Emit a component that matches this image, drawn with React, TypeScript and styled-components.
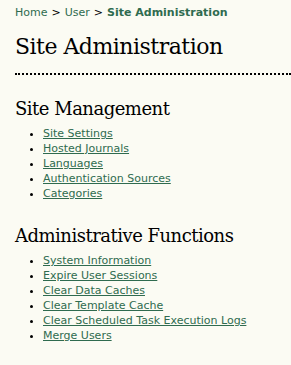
import React from "react";
import styled, { createGlobalStyle } from "styled-components";

const GlobalStyle = createGlobalStyle`
  html, body {
    margin: 0;
    padding: 0;
    background: #fbfbf3;
  }
  body {
    font-family: "DejaVu Sans", Verdana, sans-serif;
    color: #000;
  }
`;

const Page = styled.div`
  padding: 5px 0 20px 15px;
`;

const Breadcrumb = styled.div`
  font-size: 11px;
  line-height: 15px;
`;

const Crumb = styled.a<{ $current?: boolean }>`
  color: #2f6b4f;
  text-decoration: none;
  font-weight: ${(p) => (p.$current ? "bold" : "normal")};
`;

const Sep = styled.span`
  margin: 0 4px;
`;

const PageTitle = styled.h1`
  margin: 12px 0 0;
  padding-bottom: 11px;
  font-family: "DejaVu Serif", Georgia, serif;
  font-weight: normal;
  font-size: 22px;
  letter-spacing: -0.5px;
  line-height: 30px;
  border-bottom: 2px dotted #000;
`;

const SectionTitle = styled.h2<{ $gap: number }>`
  margin: ${(p) => p.$gap}px 0 0;
  font-family: "DejaVu Serif", Georgia, serif;
  font-weight: normal;
  font-size: 18px;
  letter-spacing: -0.5px;
  line-height: 24px;
`;

const LinkList = styled.ul`
  margin: 5px 0 0;
  padding-left: 28px;
  font-size: 11px;
  line-height: 15px;
`;

const Item = styled.li``;

const ItemLink = styled.a`
  color: #2f6b4f;
  text-decoration: underline;
`;

const management = [
  "Site Settings",
  "Hosted Journals",
  "Languages",
  "Authentication Sources",
  "Categories",
];

const functions = [
  "System Information",
  "Expire User Sessions",
  "Clear Data Caches",
  "Clear Template Cache",
  "Clear Scheduled Task Execution Logs",
  "Merge Users",
];

export default function App() {
  return (
    <>
      <GlobalStyle />
      <Page>
        <Breadcrumb>
          <Crumb href="#">Home</Crumb>
          <Sep>&gt;</Sep>
          <Crumb href="#">User</Crumb>
          <Sep>&gt;</Sep>
          <Crumb href="#" $current>
            Site Administration
          </Crumb>
        </Breadcrumb>
        <PageTitle>Site Administration</PageTitle>

        <SectionTitle $gap={22}>Site Management</SectionTitle>
        <LinkList>
          {management.map((m) => (
            <Item key={m}>
              <ItemLink href="#">{m}</ItemLink>
            </Item>
          ))}
        </LinkList>

        <SectionTitle $gap={23}>Administrative Functions</SectionTitle>
        <LinkList>
          {functions.map((f) => (
            <Item key={f}>
              <ItemLink href="#">{f}</ItemLink>
            </Item>
          ))}
        </LinkList>
      </Page>
    </>
  );
}
